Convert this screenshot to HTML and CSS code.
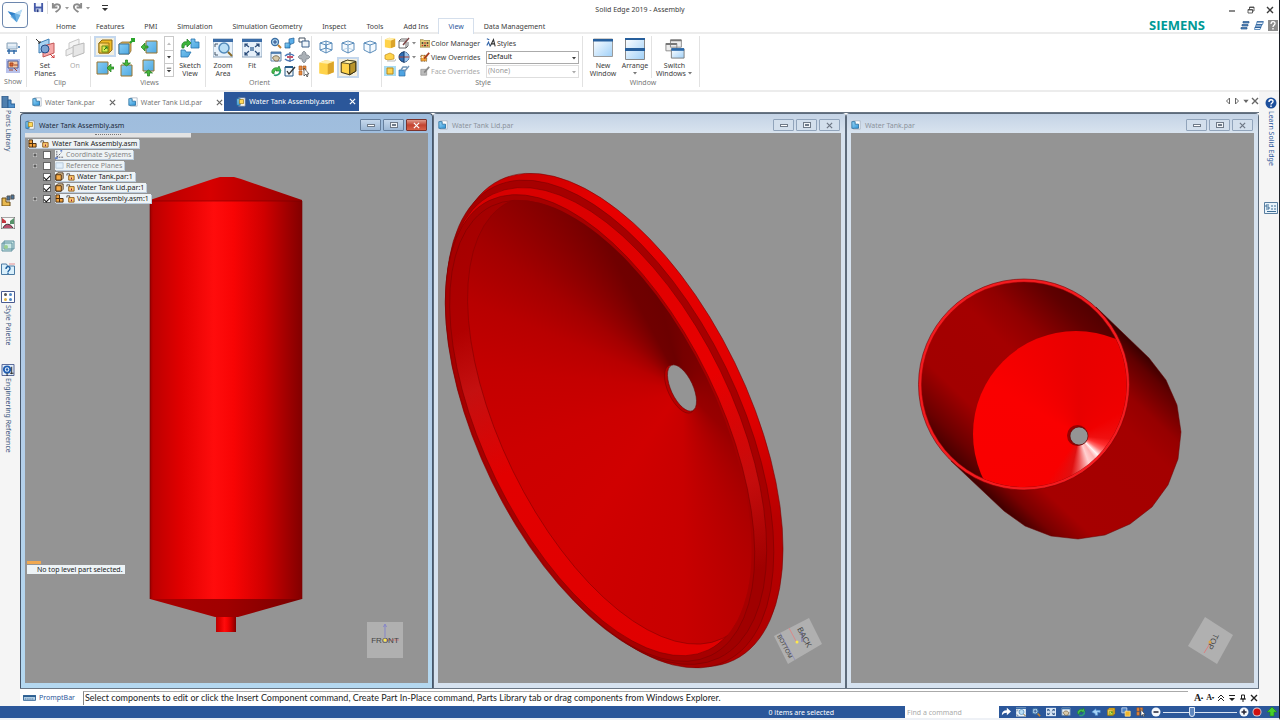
FILE: index.html
```html
<!DOCTYPE html>
<html lang="en">
<head>
<meta charset="utf-8">
<title>Solid Edge 2019 - Assembly</title>
<link rel="stylesheet" href="styles.css">
</head>
<body>
<svg class="defs" aria-hidden="true">
<defs>
<linearGradient id="gBlue" x1="0" y1="0" x2="1" y2="1"><stop offset="0" stop-color="#9bd8f8"/><stop offset="1" stop-color="#2f95d8"/></linearGradient>
<linearGradient id="gPale" x1="0" y1="0" x2="1" y2="1"><stop offset="0" stop-color="#fff"/><stop offset="1" stop-color="#9fd0f8"/></linearGradient>
<linearGradient id="gGold" x1="0" y1="0" x2="1" y2="1"><stop offset="0" stop-color="#ffe88a"/><stop offset="1" stop-color="#e0a010"/></linearGradient>
<linearGradient id="gSq" x1="0" y1="0" x2="1" y2="1"><stop offset="0" stop-color="#86ccf4"/><stop offset="1" stop-color="#4fa9e2"/></linearGradient>
</defs>
<symbol id="logo" viewBox="0 0 24 24"><path d="M4 8l8 2 8-4-6 14z" fill="#9cc9ee"/><path d="M4 8l8 2 2 10z" fill="#2f7fc8"/><path d="M12 10l8-4-6 14z" fill="#b9def6"/><path d="M7 14l5-4 6 2-4 8z" fill="#4f9fdc" opacity=".7"/></symbol>
<symbol id="save" viewBox="0 0 12 12"><path d="M1 1h10v10H2l-1-1z" fill="#4459a8"/><path d="M3 1h6v4H3z" fill="#f2f6fd"/><path d="M3 7h6v4H3z" fill="#c8d4ee"/><path d="M4 8h2v3H4z" fill="#2c3d80"/></symbol>
<symbol id="undo" viewBox="0 0 12 12"><path d="M2 1v5h5M2.500 5.500C5 1 10 2 10 5.500S7 9 5 11" fill="none" stroke="#8b8b8b" stroke-width="2"/></symbol>
<symbol id="dd" viewBox="0 0 6 6"><path d="M1 2h4L3 4.500z" fill="currentColor"/></symbol>
<symbol id="ddbar" viewBox="0 0 8 8"><path d="M1 1h6v1H1zM1 4h6L4 7z" fill="currentColor"/></symbol>
<symbol id="up" viewBox="0 0 6 6"><path d="M1 4h4L3 1.500z" fill="currentColor"/></symbol>
<symbol id="left" viewBox="0 0 8 8"><path d="M5.500 1v6l-3-3z" fill="none" stroke="currentColor"/></symbol>
<symbol id="right" viewBox="0 0 8 8"><path d="M2.500 1v6l3-3z" fill="none" stroke="currentColor"/></symbol>
<symbol id="x" viewBox="0 0 8 8"><path d="M1 1l6 6M7 1L1 7" stroke="currentColor" stroke-width="1.400"/></symbol>
<symbol id="min" viewBox="0 0 8 8"><path d="M1 5h6" stroke="currentColor" stroke-width="1.200"/></symbol>
<symbol id="restore" viewBox="0 0 8 8"><path d="M1 3.500h4.500v3.500H1zM2.500 3.500V1H7v4H5.500M1 4h4.500M2.500 1.500H7" fill="none" stroke="currentColor" stroke-width=".8"/></symbol>
<symbol id="part" viewBox="0 0 12 12"><path d="M3 1h8v10H3z" fill="#fff" stroke="#9aa6b5" stroke-width=".8"/><path d="M1 2h4v3h4v5H1z" fill="url(#gBlue)" stroke="#1b6498" stroke-width=".9"/></symbol>
<symbol id="asm" viewBox="0 0 12 12"><path d="M3 1h8v10H3z" fill="#fff" stroke="#6f8196" stroke-width=".8"/><path d="M1 2h4v8H1z" fill="url(#gBlue)" stroke="#1b6498" stroke-width=".8"/><path d="M4 3h5v5H4z" fill="#ffd95a" stroke="#9a7410" stroke-width=".8"/></symbol>
<symbol id="stack" viewBox="0 0 10 10"><path d="M3 1h6v1.500H3zM2 4h6v1.500H2zM1 7h6v1.500H1z" fill="#4e86bf" stroke="#2c568a" stroke-width=".7"/></symbol>
<symbol id="stack2" viewBox="0 0 10 10"><path d="M3 1h6.500l-1 3H2.500zM2 4h6l-1 2.500H1.500zM1 6.500h6L6 9H.5z" fill="#eef5fc" stroke="#3f77b0" stroke-width=".8"/><path d="M3 1.500h6M2 4.500h6M1 7h6" stroke="#2e609a" stroke-width="1.100"/></symbol>
<symbol id="help" viewBox="0 0 10 11"><path d="M0 0h10v11H0z" fill="#8d8d8d"/><path d="M3 4c0-3 4-3 4-.5C7 5 5 5 5 7M5 8v1.500" fill="none" stroke="#fff" stroke-width="1.300"/></symbol>
<symbol id="show1" viewBox="0 0 14 14"><path d="M1 2h10v6H1z" fill="#cfe0ef" stroke="#8ea4b8"/><path d="M1 10h10M3 8v5M8 9v4M12 6h2" stroke="#2f6aa8" stroke-width="1.400"/><path d="M2 4h8" stroke="#fff"/></symbol>
<symbol id="show2" viewBox="0 0 14 14"><path d="M0 0h14v14H0z" fill="#b8c1ea"/><path d="M2 2h10v7H2z" fill="#f8c79a" stroke="#4a5c98"/><path d="M4 4h3v3H4zM8 6h4M3 11h4M8 9l3 3" fill="#d9682a" stroke="#a4452b"/></symbol>
<symbol id="planes" viewBox="0 0 20 20"><path d="M4 5l10-4v10L4 15z" fill="#a9d3f2" stroke="#3f7fb5"/><path d="M8 8l11-3v10L8 19z" fill="#f5a9a9" stroke="#c25656"/><circle cx="10" cy="11" r="4" fill="#7ba4d4" stroke="#274c86"/><path d="M1 1l4 4M3 5h2V3" fill="none" stroke="#333"/><path d="M15 16l4 4M19 17v3h-3" fill="none" stroke="#c33"/></symbol>
<symbol id="planesOff" viewBox="0 0 20 20"><path d="M4 5l10-4v10L4 15z" fill="#f4f4f4" stroke="#c8c8c8"/><path d="M8 8l11-3v10L8 19z" fill="#e6e6e6" stroke="#b8b8b8"/><path d="M1 12l7-3v6l-7 3z" fill="#ededed" stroke="#c4c4c4"/></symbol>
<symbol id="iso" viewBox="0 0 18 18"><path d="M3 5l3-3h10v10l-3 3H3z" fill="#f0bb24" stroke="#8a6610"/><path d="M3 5h10v10H3z" fill="url(#gGold)" stroke="#9a7410"/><path d="M6 8h6v6H6z" fill="#d6ea4f" stroke="#6a8f16"/><path d="M8 12l3-3M9 9h2v2" fill="none" stroke="#267a22"/></symbol>
<symbol id="vIso" viewBox="0 0 18 18"><path d="M1 6l3-2h9v9l-2 3H1z" fill="#e0b25a" stroke="#8a6a2a" stroke-width=".8"/><path d="M1 6h10v10H1z" fill="url(#gSq)" stroke="#3a769f"/><path d="M12 5l4-4M13 1h3v3" fill="none" stroke="#2ba52b" stroke-width="2"/></symbol>
<symbol id="vL" viewBox="0 0 18 18"><path d="M6 3h11v12H6z" fill="url(#gSq)" stroke="#98742f"/><path d="M1 9l4-4v3h3v2H5v3z" fill="#46b93b" stroke="#1f7d1d" stroke-width=".7"/></symbol>
<symbol id="vR" viewBox="0 0 18 18"><path d="M1 3h11v12H1z" fill="url(#gSq)" stroke="#98742f"/><path d="M11 9l4-4v3h3v2h-3v3z" fill="#46b93b" stroke="#1f7d1d" stroke-width=".7"/></symbol>
<symbol id="vT" viewBox="0 0 18 18"><path d="M3 6h11v11H3z" fill="url(#gSq)" stroke="#98742f"/><path d="M8.500 7l-4-3h3V1h2v3h3z" fill="#46b93b" stroke="#1f7d1d" stroke-width=".7"/></symbol>
<symbol id="vB" viewBox="0 0 18 18"><path d="M3 1h11v11H3z" fill="url(#gSq)" stroke="#98742f"/><path d="M8.500 11l-4 3h3v3h2v-3h3z" fill="#46b93b" stroke="#1f7d1d" stroke-width=".7"/></symbol>
<symbol id="sketch" viewBox="0 0 20 20"><path d="M11 1h4v3h4v6h-8zM1 12h4l1 2h5l-3 5H1z" fill="url(#gBlue)" stroke="#2875ad" stroke-width=".8"/><path d="M2 10C1 5 4 3 7 4V1l4 4-4 4V7C5 6 4 8 4 10z" fill="#3db53b" stroke="#1c7a24" stroke-width=".7"/></symbol>
<symbol id="zoomArea" viewBox="0 0 20 20"><path d="M0 1h20v18H0z" fill="#e8f2fb" stroke="#8ba3bb"/><path d="M0 1h20v3H0z" fill="#3b6da8"/><circle cx="11" cy="10" r="5" fill="#b9def6" stroke="#5289b9" stroke-width="1.500"/><path d="M15 14l4 4" stroke="#8a6a28" stroke-width="2"/><path d="M2 6v3M2 6h3M2 17v-3M2 17h3" stroke="#456"/></symbol>
<symbol id="fit" viewBox="0 0 20 20"><path d="M0 1h20v18H0z" fill="#e6f0fa" stroke="#8ba3bb"/><path d="M0 1h20v3H0z" fill="#3b6da8"/><path d="M8 9h4v4H8z" fill="#6f91b6"/><path d="M3 9V6h3M14 6h3v3M3 14v3h3M14 17h3v-3M3 6l4 3M17 6l-4 3M3 17l4-4M17 17l-4-4" fill="none" stroke="#294b78" stroke-width="1.200"/></symbol>
<symbol id="mag" viewBox="0 0 12 12"><circle cx="5" cy="5" r="3.500" fill="#b7dcf5" stroke="#3c6fa3" stroke-width="1.300"/><path d="M5 3v4M3 5h4" stroke="#274b86"/><path d="M8 8l3 3" stroke="#c08030" stroke-width="2"/></symbol>
<symbol id="blocks" viewBox="0 0 12 12"><path d="M5 2l5-1v5L5 8z" fill="#5aaeea" stroke="#215f95" stroke-width=".7"/><path d="M1 6h5v5H1z" fill="url(#gBlue)" stroke="#215f95" stroke-width=".7"/></symbol>
<symbol id="wins" viewBox="0 0 12 12"><path d="M1 1h6v4H1z" fill="#fff" stroke="#44515f"/><path d="M4 4h7v6H4z" fill="#eef4fa" stroke="#3b5f8a"/></symbol>
<symbol id="cam" viewBox="0 0 12 12"><path d="M1 1h10v9H1z" fill="#e9f1f8" stroke="#6584a5"/><path d="M1 2h10" stroke="#3368a5" stroke-width="1.500"/><path d="M2.500 7c1-3 6-3 7 0L8 10H5z" fill="#d8c9a8" stroke="#6b5a3c" stroke-width=".8"/></symbol>
<symbol id="rot" viewBox="0 0 12 12"><path d="M6 1v10" stroke="#334"/><path d="M1 5c3-3 8-2 9 0M1 8c3 3 8 2 9 0" fill="none" stroke="#4a78b8" stroke-width="1.500"/><path d="M3 5h6v2H3z" fill="#c5536b"/></symbol>
<symbol id="pan" viewBox="0 0 12 12"><path d="M6 0l2 2v2h2l2 2-2 2H8v2l-2 2-2-2V8H2L0 6l2-2h2V2z" fill="#aab0b6" stroke="#6c747c" stroke-width=".6"/></symbol>
<symbol id="cycle" viewBox="0 0 12 12"><path d="M2 8C1 4 5 2 8 3l1-2 2 5-5 0 1-1C5 5 4 6 4 9z" fill="#49c04a" stroke="#1d7d2b" stroke-width=".7"/><path d="M10 5c1 4-3 6-6 5" fill="none" stroke="#2b9f75" stroke-width="1.800"/></symbol>
<symbol id="check" viewBox="0 0 12 12"><path d="M1 2h8v9H1z" fill="#f4f8fb" stroke="#275b89"/><path d="M1 2h8" stroke="#275b89" stroke-width="2"/><path d="M3 6l2 3 6-7" fill="none" stroke="#333" stroke-width="1.300"/></symbol>
<symbol id="pick" viewBox="0 0 12 12"><path d="M1 1h3v4H1zM5 1h3v4H5zM1 6h3v4H1z" fill="#e98a3b" stroke="#a3521b" stroke-width=".6"/><path d="M6 3v8l2-2 1 3 1-1-1-2h2z" fill="#fff" stroke="#333" stroke-width=".7"/></symbol>
<symbol id="wire1" viewBox="0 0 14 14"><path d="M1 3l6 2v8l-6-3zM7 5l6-2v7l-6 3M1 3l6-2 6 2M7 1v7l-6 2M7 8l6 2" fill="#f5fafe" stroke="#4c82b4" stroke-width=".9"/></symbol>
<symbol id="wire2" viewBox="0 0 14 14"><path d="M1 3l6 2v8l-6-3zM7 5l6-2v7l-6 3M1 3l6-2 6 2" fill="#f5fafe" stroke="#4c82b4" stroke-width=".9"/><path d="M7 1v7l-6 2M7 8l6 2" fill="none" stroke="#a9c7e0" stroke-width=".7"/></symbol>
<symbol id="wire3" viewBox="0 0 14 14"><path d="M1 3l6-2 6 2v7l-6 3-6-3z" fill="#f5fafe" stroke="#4c82b4" stroke-width=".9"/><path d="M1 3l6 2 6-2M7 5v8" fill="none" stroke="#4c82b4" stroke-width=".9"/></symbol>
<symbol id="gold" viewBox="0 0 14 14"><path d="M1 3l5-2 7 1v9l-6 2-6-1z" fill="#ffd34a"/><path d="M8 4l5-2v9l-5 2z" fill="#dba42a"/><path d="M1 3l5-2 7 1-5 2z" fill="#ffeeb0"/></symbol>
<symbol id="goldEdge" viewBox="0 0 14 14"><path d="M1 3l5-2 7 1v8l-5 3-7-2z" fill="#ffd34a" stroke="#353015" stroke-width=".8"/><path d="M8 4l5-2v8l-5 3z" fill="#b8942c" stroke="#353015" stroke-width=".8"/><path d="M1 3l7 1 5-2-7-1z" fill="#fff0a8" stroke="#353015" stroke-width=".6"/></symbol>
<symbol id="goldBlue" viewBox="0 0 12 12"><path d="M0 1h12v10H0z" fill="#a9dcf2"/><path d="M3 3h6v6H3z" fill="#ffd44f" stroke="#ba8a18"/></symbol>
<symbol id="flat" viewBox="0 0 12 12"><path d="M1 4l5-2 4 2v4l-6 1-3-1z" fill="#ffd34a" stroke="#c18d1b" stroke-width=".7"/><path d="M3 10h8l1-2" fill="none" stroke="#bbb"/></symbol>
<symbol id="boxpen" viewBox="0 0 12 12"><path d="M1 4h7v7H1zM1 4l2-2h6M8 11l2-2V5" fill="#fff" stroke="#444" stroke-width=".8"/><path d="M5 8l6-7" stroke="#7b4444" stroke-width="1.500"/></symbol>
<symbol id="ball" viewBox="0 0 12 12"><circle cx="6" cy="6" r="5" fill="#2e6fb7" stroke="#173a6a"/><path d="M6 1a5 5 0 0 1 0 10z" fill="#9cc5ec"/><path d="M1 6h10" stroke="#b33c2c"/><path d="M6 0v12" stroke="#173a6a"/></symbol>
<symbol id="shade" viewBox="0 0 12 12"><path d="M1 5h6v6H1z" fill="#4ea4e2" stroke="#2b6aa0" stroke-width=".7"/><path d="M6 7l5-6M3 5l2-3h4" fill="none" stroke="#7396b8" stroke-width="1.500"/></symbol>
<symbol id="palette" viewBox="0 0 12 12"><path d="M0 2h4l1 1h7v8H0z" fill="#e5d07b" stroke="#7d6b28" stroke-width=".7"/><path d="M2 5h2v2H2zM8 5h2v2H8zM5 8h2v2H5z" fill="#222"/><path d="M5 5h2v2H5zM2 8h2v2H2zM8 8h2v2H8z" fill="#c33d30"/></symbol>
<symbol id="override" viewBox="0 0 12 12"><path d="M1 4h7v7H1z" fill="#f3a43a" stroke="#473311" stroke-dasharray="1 1"/><path d="M5 8l6-7" stroke="#a53d20" stroke-width="2"/><path d="M2 5h2v2H2z" fill="#fff"/></symbol>
<symbol id="overrideOff" viewBox="0 0 12 12"><path d="M1 4h7v7H1z" fill="#bbb" stroke="#999"/><path d="M5 8l6-7" stroke="#888" stroke-width="2"/></symbol>
<symbol id="styles" viewBox="0 0 12 12"><path d="M5 10l4-8 2 8M6 7h4" fill="none" stroke="#333" stroke-width="1.300"/><path d="M1 9l2-4 2 5M1 1l3 1" fill="none" stroke="#2f62a7" stroke-width="1.300"/></symbol>
<symbol id="win" viewBox="0 0 20 20"><path d="M.5 1h19v17.500H.5z" fill="url(#gPale)" stroke="#9b9b9b"/><path d="M0 1h20v2.500H0z" fill="#275f9c"/></symbol>
<symbol id="arrange" viewBox="0 0 20 22"><path d="M.5.5h19v10H.5zM.5 11.500h19v10H.5z" fill="url(#gPale)" stroke="#888"/><path d="M0 0h20v2H0zM0 10h20v3H0z" fill="#275f9c"/></symbol>
<symbol id="switch" viewBox="0 0 22 22"><path d="M6 1h12v8H6zM1 5h12v8H1z" fill="#eee" stroke="#888"/><path d="M6 1.500h12M1 5.500h12" stroke="#777" stroke-width="2"/><path d="M7 11h14v10H7z" fill="url(#gPale)" stroke="#777"/><path d="M7 11.500h14" stroke="#2a68a8" stroke-width="3"/></symbol>
<symbol id="lib" viewBox="0 0 14 12"><path d="M1 0h6v12H1z" fill="#4f7fae" stroke="#345f8c"/><path d="M7 4h3v4h4v4H7z" fill="#4f90cb" stroke="#2b5f92"/></symbol>
<symbol id="r2" viewBox="0 0 14 12"><path d="M1 4h4v4h4v4H1z" fill="#e8b84e" stroke="#6a4d19"/><path d="M6 2h3v4H6zM10 1h3v4h-3z" fill="#47739b" stroke="#555"/></symbol>
<symbol id="r3" viewBox="0 0 14 12"><path d="M0 0h14v12H0z" fill="#f8f8f8" stroke="#555"/><path d="M1 1l4 3v2H1z" fill="#c2343d"/><path d="M13 1L9 4v3h4z" fill="#55936a"/><path d="M2 11c2-5 7-5 10 0" fill="#b9506e" stroke="#333"/></symbol>
<symbol id="r4" viewBox="0 0 14 12"><path d="M3 1h10v8H3zM1 3h10v8H1z" fill="#cde9e6" stroke="#5c8e9e"/><circle cx="5" cy="7" r="2" fill="#9bcf8f"/></symbol>
<symbol id="r5" viewBox="0 0 14 12"><path d="M.5 1h5l1 2h7v8.500H.5z" fill="#d9effb" stroke="#4c7ba3"/><path d="M8 1h6" stroke="#e38f92"/><path d="M5 6c0-3 4-3 4-.5S7 7 7 9M7 9.500V11" fill="none" stroke="#17599a" stroke-width="1.300"/></symbol>
<symbol id="r6" viewBox="0 0 14 12"><path d="M.5.5h13v11H.5z" fill="#fff" stroke="#4a5b90"/><circle cx="4.500" cy="3.500" r="1.500" fill="#555"/><circle cx="9.500" cy="3.500" r="1.500" fill="#4f86c4"/><circle cx="4.500" cy="8.500" r="1.500" fill="#e1b23b"/><circle cx="9.500" cy="8.500" r="1.500" fill="#4f86c4"/></symbol>
<symbol id="r7" viewBox="0 0 14 13"><path d="M.5.5h13v12H.5z" fill="#e4effa" stroke="#4a5b90"/><circle cx="6" cy="6" r="3.500" fill="none" stroke="#1e5cb0" stroke-width="2"/><circle cx="6" cy="6" r="1.300" fill="#1e5cb0"/><path d="M9 10h4M11 3v8M6 10v3" stroke="#222"/></symbol>
<symbol id="q" viewBox="0 0 12 12"><circle cx="6" cy="6" r="5.500" fill="#1c4f9c"/><path d="M4 5c0-3 4-3 4-.5C8 6 6 6 6 7.500M6 8.500V10" fill="none" stroke="#fff" stroke-width="1.400"/></symbol>
<symbol id="s1" viewBox="0 0 14 12"><path d="M.5.5h13v11H.5z" fill="#e8f3fb" stroke="#5a7fa0"/><path d="M5 3H2v2h3v2H2M7 4h2M10 4h2M7 7h2M10 7h2M3 9.500h9" fill="none" stroke="#3d6d95"/></symbol>
<symbol id="tAsm" viewBox="0 0 10 10"><path d="M1 1h4v4h4v4H1z" fill="#f0a23e" stroke="#3d2208"/><path d="M1 5h4v4" fill="none" stroke="#3d2208"/></symbol>
<symbol id="tLock" viewBox="0 0 10 10"><path d="M1 4V2h3v3" fill="none" stroke="#555"/><path d="M3 4h6v5H3z" fill="#ffcc70" stroke="#8a5a1c"/><path d="M5.500 6h1v2h-1z" fill="#704"/></symbol>
<symbol id="tCs" viewBox="0 0 10 10"><path d="M2 1v7h7M2 8l5-5" fill="none" stroke="#556" stroke-dasharray="2 1"/><path d="M0 9h3M6 1h2" stroke="#345dc0" stroke-width="1.500"/></symbol>
<symbol id="tPl" viewBox="0 0 10 10"><path d="M1 2h8v6H1z" fill="#e2effb" stroke="#b5c8da"/></symbol>
<symbol id="tPart" viewBox="0 0 10 10"><path d="M1 3l2-2h6v6L7 9H1z" fill="#fbe2b4" stroke="#3d2208"/><path d="M1 3h6v6H1z" fill="#f7ab44" stroke="#3d2208"/></symbol>
<symbol id="plus" viewBox="0 0 8 8"><path d="M.5.5h7v7h-7z" fill="#bdbdbd" stroke="#8a8a8a"/><path d="M2 4h4M4 2v4" stroke="#222"/></symbol>
<symbol id="prompt" viewBox="0 0 14 6"><path d="M.5.5h13v5H.5z" fill="#bcd6ea" stroke="#2c5f92"/><path d="M0 1h14" stroke="#2c5f92" stroke-width="2"/><path d="M2 4h10" stroke="#2c5f92" stroke-dasharray="1 1"/></symbol>
<symbol id="chev" viewBox="0 0 8 8"><path d="M1 4l3-3 3 3M1 7l3-3 3 3" fill="none" stroke="currentColor"/></symbol>
<symbol id="pin" viewBox="0 0 8 8"><path d="M2.500 1h3v4h-3zM1 5h6M4 5v3" fill="none" stroke="currentColor"/></symbol>
<symbol id="share" viewBox="0 0 12 12"><path d="M1 10c0-4 2-6 6-6V1l5 4.500L7 10V7C4 7 3 8 1 10z" fill="#fff"/></symbol>
<symbol id="fitw" viewBox="0 0 12 12"><path d="M0 1h12v10H0z" fill="#dbe8f6"/><path d="M2 3l3 2M10 3L7 5M2 9l3-2M10 9L7 7M2 5V3h2M10 5V3H8M2 7v2h2M10 7v2H8" fill="none" stroke="#234a80"/></symbol>
<symbol id="bluearrow" viewBox="0 0 12 12"><path d="M1 6l5-4v2h5v3l-3-1v4H5V8z" fill="#a6d3f7" stroke="#4f93d2" stroke-width=".7"/></symbol>
<symbol id="two" viewBox="0 0 12 12"><path d="M1 1h6v6H1z" fill="#4d82c4" stroke="#cfdced"/><path d="M5 5h6v6H5z" fill="#f0b52b" stroke="#ffdf8a"/></symbol>
<symbol id="zm" viewBox="0 0 10 10"><circle cx="5" cy="5" r="4.500" fill="#f5f8fc"/><path d="M2.500 5h5" stroke="#223" stroke-width="1.500"/></symbol>
<symbol id="zp" viewBox="0 0 10 10"><circle cx="5" cy="5" r="4.500" fill="#f5f8fc"/><path d="M2.500 5h5M5 2.500v5" stroke="#223" stroke-width="1.500"/></symbol>
<symbol id="rec" viewBox="0 0 10 10"><circle cx="5" cy="5" r="4.500" fill="#d9d0d8"/><circle cx="5" cy="5" r="3.600" fill="#d00f0f"/></symbol>
<symbol id="upg" viewBox="0 0 10 10"><path d="M5 0l5 5H7v4H3V5H0z" fill="#46cf2b" stroke="#1d8a15" stroke-width=".6"/></symbol>
</svg>

<header class="top">
  <button class="app" aria-label="Application menu"><svg><use href="#logo"/></svg></button>
  <div class="top-rows">
    <div class="titlebar">
      <div class="quick">
        <button aria-label="Save"><svg><use href="#save"/></svg></button><i class="qsep"></i>
        <button aria-label="Undo"><svg><use href="#undo"/></svg></button><svg class="tiny"><use href="#dd"/></svg>
        <button aria-label="Redo"><svg class="flip"><use href="#undo"/></svg></button><svg class="tiny"><use href="#dd"/></svg>
        <button class="more" aria-label="Customize"><svg class="tiny8"><use href="#ddbar"/></svg></button>
      </div>
      <h1 class="title">Solid Edge 2019 - Assembly</h1>
      <div class="sys">
        <button aria-label="Minimize"><svg><use href="#min"/></svg></button>
        <button aria-label="Restore"><svg><use href="#restore"/></svg></button>
        <button aria-label="Close"><svg><use href="#x"/></svg></button>
      </div>
    </div>
    <div class="menurow">
      <nav class="menu">
        <button>Home</button><button>Features</button><button>PMI</button><button>Simulation</button><button>Simulation Geometry</button><button>Inspect</button><button>Tools</button><button>Add Ins</button><button class="on">View</button><button>Data Management</button>
      </nav>
      <span class="brand">SIEMENS</span>
      <div class="helpers">
        <button aria-label="Stack"><svg><use href="#stack"/></svg></button><button aria-label="Cascade"><svg><use href="#stack2"/></svg></button><button aria-label="Help"><svg><use href="#help"/></svg></button>
      </div>
    </div>
  </div>
</header>

<section class="ribbon">
  <div class="group g-show">
    <div class="body col"><button aria-label="Show bars"><svg class="i14"><use href="#show1"/></svg></button><button aria-label="Show panes"><svg class="i14"><use href="#show2"/></svg></button></div>
    <h2>Show</h2>
  </div>
  <div class="group g-clip">
    <div class="body"><button class="big"><svg class="i20"><use href="#planes"/></svg><span>Set<br>Planes</span></button><button class="big" disabled><svg class="i20"><use href="#planesOff"/></svg><span>On</span></button></div>
    <h2>Clip</h2>
  </div>
  <div class="group g-views">
    <div class="body">
      <div class="gallery">
        <button class="sel" aria-label="Iso"><svg class="i18"><use href="#iso"/></svg></button><button aria-label="Dimetric"><svg class="i18"><use href="#vIso"/></svg></button><button aria-label="Left"><svg class="i18"><use href="#vL"/></svg></button>
        <button aria-label="Right"><svg class="i18"><use href="#vR"/></svg></button><button aria-label="Top"><svg class="i18"><use href="#vT"/></svg></button><button aria-label="Bottom"><svg class="i18"><use href="#vB"/></svg></button>
      </div>
      <div class="scroller"><button disabled aria-label="Up"><svg class="tiny"><use href="#up"/></svg></button><button aria-label="Down"><svg class="tiny"><use href="#dd"/></svg></button><button aria-label="All"><svg class="tiny"><use href="#ddbar"/></svg></button></div>
      <button class="big"><svg class="i20"><use href="#sketch"/></svg><span>Sketch<br>View</span></button>
    </div>
    <h2>Views</h2>
  </div>
  <div class="group g-orient">
    <div class="body">
      <button class="big"><svg class="i20"><use href="#zoomArea"/></svg><span>Zoom<br>Area</span></button><button class="big"><svg class="i20"><use href="#fit"/></svg><span>Fit</span></button>
      <div class="mini">
        <button aria-label="Zoom"><svg class="i12"><use href="#mag"/></svg></button><button aria-label="Previous"><svg class="i12"><use href="#blocks"/></svg></button><button aria-label="Window"><svg class="i12"><use href="#wins"/></svg></button>
        <button aria-label="Look"><svg class="i12"><use href="#cam"/></svg></button><button aria-label="Rotate"><svg class="i12"><use href="#rot"/></svg></button><button aria-label="Pan"><svg class="i12"><use href="#pan"/></svg></button>
        <button aria-label="Refresh"><svg class="i12"><use href="#cycle"/></svg></button><button aria-label="Sketch"><svg class="i12"><use href="#check"/></svg></button><button aria-label="Pick"><svg class="i12"><use href="#pick"/></svg></button>
      </div>
    </div>
    <h2>Orient</h2>
  </div>
  <div class="group g-shade">
    <div class="body gallery">
      <button aria-label="Wire frame"><svg class="i14"><use href="#wire1"/></svg></button><button aria-label="Hidden edges"><svg class="i14"><use href="#wire2"/></svg></button><button aria-label="Visible edges"><svg class="i14"><use href="#wire3"/></svg></button>
      <button aria-label="Shaded"><svg class="i16"><use href="#gold"/></svg></button><button class="sel" aria-label="Shaded with edges"><svg class="i16"><use href="#goldEdge"/></svg></button>
    </div>
  </div>
  <div class="group g-style">
    <div class="body">
      <div class="mini two">
        <button aria-label="Shadow"><svg class="i12"><use href="#gold"/></svg></button><button aria-label="Edges"><svg class="i12"><use href="#boxpen"/></svg><svg class="tiny"><use href="#dd"/></svg></button>
        <button aria-label="Floor"><svg class="i12"><use href="#flat"/></svg></button><button aria-label="Reflection"><svg class="i12"><use href="#ball"/></svg><svg class="tiny"><use href="#dd"/></svg></button>
        <button aria-label="Perspective"><svg class="i12"><use href="#goldBlue"/></svg></button><button aria-label="Sharpen"><svg class="i12"><use href="#shade"/></svg></button>
      </div>
      <div class="cmds"><button><svg class="i10"><use href="#palette"/></svg>Color Manager</button><label for="vo"><svg class="i10"><use href="#override"/></svg>View Overrides</label><label for="fo" class="off"><svg class="i10"><use href="#overrideOff"/></svg>Face Overrides</label></div>
      <div class="cmds picks">
        <button><svg class="i10"><use href="#styles"/></svg>Styles</button>
        <span class="combo"><select id="vo"><option>Default</option></select><svg class="tiny"><use href="#dd"/></svg></span>
        <span class="combo off"><select id="fo" disabled><option>(None)</option></select><svg class="tiny"><use href="#dd"/></svg></span>
      </div>
    </div>
    <h2>Style</h2>
  </div>
  <div class="group g-window">
    <div class="body"><button class="big"><svg class="i20"><use href="#win"/></svg><span>New<br>Window</span></button><button class="big"><svg class="i20 tall"><use href="#arrange"/></svg><span>Arrange</span><svg class="tiny"><use href="#dd"/></svg></button><button class="big sw"><svg class="i20 tall"><use href="#switch"/></svg><span>Switch<br>Windows<svg class="tiny"><use href="#dd"/></svg></span></button></div>
    <h2>Window</h2>
  </div>
</section>

<div class="work">
  <aside class="rail left">
    <button class="r-lib"><svg><use href="#lib"/></svg><span>Parts Library</span></button>
    <button aria-label="Alternate assemblies"><svg><use href="#r2"/></svg></button>
    <button aria-label="Sensors"><svg><use href="#r3"/></svg></button>
    <button aria-label="Layers"><svg><use href="#r4"/></svg></button>
    <button aria-label="Select tools"><svg><use href="#r5"/></svg></button>
    <button class="r-style"><svg><use href="#r6"/></svg><span>Style Palette</span></button>
    <button><svg><use href="#r7"/></svg><span>Engineering Reference</span></button>
  </aside>

  <main class="center">
    <div class="doctabs">
      <div class="tab"><svg class="i10"><use href="#part"/></svg><span>Water Tank.par</span><button aria-label="Close tab"><svg><use href="#x"/></svg></button></div>
      <div class="tab"><svg class="i10"><use href="#part"/></svg><span>Water Tank Lid.par</span><button aria-label="Close tab"><svg><use href="#x"/></svg></button></div>
      <div class="tab on"><svg class="i10"><use href="#asm"/></svg><span>Water Tank Assembly.asm</span><button aria-label="Close tab"><svg><use href="#x"/></svg></button></div>
      <div class="tabnav"><button aria-label="Previous tab"><svg><use href="#left"/></svg></button><button aria-label="Next tab"><svg><use href="#right"/></svg></button><button aria-label="Tab list"><svg class="tiny8"><use href="#dd"/></svg></button><button aria-label="Close"><svg><use href="#x"/></svg></button></div>
    </div>

    <div class="mdi">
      <section class="doc active">
        <div class="dochead"><svg class="i10"><use href="#asm"/></svg><h3>Water Tank Assembly.asm</h3>
          <div class="winbtns"><button aria-label="Minimize"><i class="b-min"></i></button><button aria-label="Maximize"><i class="b-max"></i></button><button class="close" aria-label="Close"><svg><use href="#x"/></svg></button></div></div>
        <div class="view">
          <svg class="scene" viewBox="25 133 403 550" preserveAspectRatio="xMidYMid meet">
            <defs>
              <linearGradient id="tb"><stop offset="0" stop-color="#900"/><stop offset=".02" stop-color="#bc0000"/><stop offset=".2" stop-color="#e00000"/><stop offset=".42" stop-color="#ff0c0c"/><stop offset=".55" stop-color="#f80404"/><stop offset=".75" stop-color="#d00000"/><stop offset="1" stop-color="#820000"/></linearGradient>
              <linearGradient id="tc"><stop offset="0" stop-color="#b40000"/><stop offset=".4" stop-color="#d60000"/><stop offset="1" stop-color="#960000"/></linearGradient>
              <linearGradient id="td"><stop offset="0" stop-color="#a80000"/><stop offset=".5" stop-color="#a00000"/><stop offset="1" stop-color="#780000"/></linearGradient>
            </defs>
            <path d="M150 200l63-21 7-2h14l7 2 61 21v3H150z" fill="url(#tc)"/>
            <path d="M150 201h152v398H150z" fill="url(#tb)"/>
            <path d="M150 599V201h152v398" fill="none" stroke="#700" stroke-width=".6"/>
            <path d="M150 599h152l-64 18h-23z" fill="url(#td)"/>
            <path d="M216 617h20v15h-20z" fill="url(#tb)"/>
          </svg>
          <div class="pathfinder">
            <div class="grip"></div>
            <ul>
              <li class="root"><span class="chip"><svg class="i10"><use href="#tAsm"/></svg><svg class="i10"><use href="#tLock"/></svg>Water Tank Assembly.asm</span></li>
              <li><svg class="exp"><use href="#plus"/></svg><input type="checkbox" id="c1"><label for="c1" class="chip dim"><svg class="i10"><use href="#tCs"/></svg>Coordinate Systems</label></li>
              <li><svg class="exp"><use href="#plus"/></svg><input type="checkbox" id="c2"><label for="c2" class="chip dim"><svg class="i10"><use href="#tPl"/></svg>Reference Planes</label></li>
              <li><i class="exp"></i><input type="checkbox" id="c3" checked><label for="c3" class="chip"><svg class="i10"><use href="#tPart"/></svg><svg class="i10"><use href="#tLock"/></svg>Water Tank.par:1</label></li>
              <li><i class="exp"></i><input type="checkbox" id="c4" checked><label for="c4" class="chip"><svg class="i10"><use href="#tPart"/></svg><svg class="i10"><use href="#tLock"/></svg>Water Tank Lid.par:1</label></li>
              <li><svg class="exp"><use href="#plus"/></svg><input type="checkbox" id="c5" checked><label for="c5" class="chip"><svg class="i10"><use href="#tAsm"/></svg><svg class="i10"><use href="#tLock"/></svg>Valve Assembly.asm:1</label></li>
            </ul>
          </div>
          <div class="note"><i></i><p>No top level part selected.</p></div>
          <svg class="cube" viewBox="0 0 48 48"><path d="M6 6h36v36H6z" fill="#b0b0b0"/><path d="M24 24V9M22.500 11L24 8l1.500 3" fill="none" stroke="#8585c8"/><path d="M24 24h14" stroke="#d08080"/><text x="24" y="27" text-anchor="middle">FRONT</text><circle cx="24" cy="24" r="1.500" fill="#ffe94a"/></svg>
        </div>
      </section>

      <section class="doc">
        <div class="dochead"><svg class="i10"><use href="#part"/></svg><h3>Water Tank Lid.par</h3>
          <div class="winbtns"><button aria-label="Minimize"><i class="b-min"></i></button><button aria-label="Maximize"><i class="b-max"></i></button><button aria-label="Close"><svg><use href="#x"/></svg></button></div></div>
        <div class="view">
          <svg class="scene" viewBox="438 133 403 550" preserveAspectRatio="xMidYMid meet">
            <defs>
              <linearGradient id="la" gradientUnits="userSpaceOnUse" x1="-268" y1="0" x2="268" y2="0"><stop offset="0" stop-color="#c80000"/><stop offset=".12" stop-color="#e80000"/><stop offset=".6" stop-color="#e00000"/><stop offset=".8" stop-color="#b80000"/><stop offset="1" stop-color="#b00000"/></linearGradient>
              <linearGradient id="lb" gradientUnits="userSpaceOnUse" x1="-258" y1="0" x2="258" y2="0"><stop offset="0" stop-color="#d80000"/><stop offset=".5" stop-color="#e80000"/><stop offset=".72" stop-color="#c40c0c"/><stop offset=".88" stop-color="#a00000"/></linearGradient>
              <linearGradient id="lc" gradientUnits="userSpaceOnUse" x1="-247" y1="0" x2="247" y2="0"><stop offset="0" stop-color="#a40000"/><stop offset=".2" stop-color="#b00000"/><stop offset=".32" stop-color="#c41010"/><stop offset=".5" stop-color="#e20000"/><stop offset="1" stop-color="#e00000"/></linearGradient>
              <clipPath id="rim"><ellipse rx="247" ry="118" transform="translate(600 428) rotate(64)"/></clipPath>
              <clipPath id="bowl"><ellipse rx="243" ry="115" transform="translate(616 420) rotate(64)"/></clipPath>
            </defs>
            <g stroke="#700" stroke-width=".5">
              <ellipse rx="267" ry="131" transform="translate(617 420) rotate(64)" fill="url(#la)"/>
              <ellipse rx="264" ry="129" transform="translate(610 424) rotate(64)" fill="#a60000"/>
              <ellipse rx="258" ry="127" transform="translate(606 426) rotate(64)" fill="url(#lb)"/>
              <ellipse rx="253" ry="120" transform="translate(600 428) rotate(64)" fill="#a60000"/>
              <ellipse rx="247" ry="116" transform="translate(600 428) rotate(64)" fill="url(#lc)"/>
            </g>
            <g clip-path="url(#rim)"><g clip-path="url(#bowl)"><foreignObject x="438" y="180" width="360" height="480"><div class="lid-shade"></div></foreignObject></g>
            <ellipse rx="243" ry="115" transform="translate(616 420) rotate(64)" fill="none" stroke="#800" stroke-width=".6"/></g>
            <ellipse rx="26" ry="12" transform="translate(680 389) rotate(65)" fill="#b80000" stroke="#700" stroke-width=".5"/>
            <ellipse rx="25" ry="11" transform="translate(682 388) rotate(65)" fill="#949494" stroke="#600" stroke-width=".5"/>
          </svg>
          <svg class="cube" viewBox="0 0 48 48"><path d="M0 20l35-18 13 26-34 20z" fill="#b0b0b0"/><path d="M6 17l15 27" stroke="#8a8ac0" stroke-width=".7"/><path d="M15 12l8 15" stroke="#d98b8b"/><path d="M28 26V16" stroke="#6f6fc6"/><text class="s7" transform="translate(23 13) rotate(62)">BACK</text><text class="s5" transform="translate(3 20) rotate(62)">BOTTOM</text><circle cx="23" cy="26" r="1.500" fill="#ffe94a"/></svg>
        </div>
      </section>

      <section class="doc">
        <div class="dochead"><svg class="i10"><use href="#part"/></svg><h3>Water Tank.par</h3>
          <div class="winbtns"><button aria-label="Minimize"><i class="b-min"></i></button><button aria-label="Maximize"><i class="b-max"></i></button><button aria-label="Close"><svg><use href="#x"/></svg></button></div></div>
        <div class="view">
          <svg class="scene" viewBox="851 133 403 550" preserveAspectRatio="xMidYMid meet">
            <defs>
              <linearGradient id="ca" gradientUnits="userSpaceOnUse" x1="1122" y1="332" x2="978" y2="486"><stop offset="0" stop-color="#380000"/><stop offset=".06" stop-color="#600000"/><stop offset=".2" stop-color="#960000"/><stop offset=".32" stop-color="#a40000"/><stop offset=".8" stop-color="#a60000"/><stop offset=".92" stop-color="#780000"/><stop offset="1" stop-color="#400000"/></linearGradient>
              <linearGradient id="cb" gradientUnits="userSpaceOnUse" x1="1096" y1="308" x2="951" y2="461"><stop offset="0" stop-color="#500000"/><stop offset=".1" stop-color="#600000"/><stop offset=".28" stop-color="#900000"/><stop offset=".42" stop-color="#a40000"/><stop offset=".74" stop-color="#a20000"/><stop offset=".9" stop-color="#6c0000"/><stop offset="1" stop-color="#400000"/></linearGradient>
              <clipPath id="mouth"><circle cx="1024" cy="384.500" r="102.500"/></clipPath>
              <clipPath id="floor"><circle cx="1076" cy="434" r="103"/></clipPath>
            </defs>
            <path d="M1096 307L1149 358 1166 380 1177 405 1181 432 1178 459 1168 485 1152 507 1130 524 1105 535 1078 539 1051 536 1025 526 1004 511 951 461z" fill="url(#ca)" stroke="#600" stroke-width=".5"/>
            <circle cx="1024" cy="384.500" r="105.500" fill="#f41c20" stroke="#700" stroke-width=".6"/>
            <circle cx="1024" cy="384.500" r="102.500" fill="url(#cb)" stroke="#900" stroke-width=".5"/>
            <g clip-path="url(#mouth)"><g clip-path="url(#floor)"><foreignObject x="960" y="320" width="180" height="180"><div class="can-shade"></div></foreignObject></g></g>
            <circle cx="1077.500" cy="435.500" r="10.500" fill="#900"/>
            <circle cx="1079" cy="436" r="9" fill="#949494" stroke="#500" stroke-width=".6"/>
          </svg>
          <svg class="cube" viewBox="0 0 48 48"><path d="M18 1l28 18-16 29L1 30z" fill="#b0b0b0"/><path d="M24 26l-7 11" stroke="#dc7f7f"/><text class="s7" transform="translate(27 17) rotate(115)">TOP</text><circle cx="23" cy="26" r="1.500" fill="#dfa43f"/></svg>
        </div>
      </section>
    </div>

    <div class="promptbar">
      <svg class="pi"><use href="#prompt"/></svg><span class="pl">PromptBar</span>
      <p>Select components to edit or click the Insert Component command, Create Part In-Place command, Parts Library tab or drag components from Windows Explorer.</p>
      <div class="ptools"><button class="fa">A<sup>▴</sup></button><button class="fb">A<sup>▾</sup></button><button aria-label="Collapse"><svg><use href="#chev"/></svg></button><button aria-label="Menu"><svg><use href="#ddbar"/></svg></button><button aria-label="Pin"><svg><use href="#pin"/></svg></button><button aria-label="Close"><svg><use href="#x"/></svg></button></div>
    </div>
  </main>

  <aside class="rail rightrail">
    <button class="r-learn"><svg class="i12"><use href="#q"/></svg><span>Learn Solid Edge</span></button>
    <button aria-label="Properties"><svg><use href="#s1"/></svg></button>
  </aside>
</div>

<footer class="status">
  <span class="count">0 items are selected</span>
  <input type="text" placeholder="Find a command" aria-label="Find a command">
  <div class="stools">
    <button aria-label="Go"><svg><use href="#share"/></svg></button><button aria-label="Zoom area"><svg><use href="#zoomArea"/></svg></button><button aria-label="Zoom"><svg><use href="#mag"/></svg></button><button aria-label="Fit"><svg><use href="#fitw"/></svg></button><button aria-label="Pan"><svg><use href="#cam"/></svg></button><button aria-label="Rotate"><svg><use href="#cycle"/></svg></button><button aria-label="Previous view"><svg><use href="#bluearrow"/></svg></button><button aria-label="View orientation"><svg><use href="#iso"/></svg></button><button aria-label="View style"><svg><use href="#two"/></svg></button><button aria-label="Pick"><svg><use href="#pick"/></svg></button>
  </div>
  <button aria-label="Zoom out"><svg><use href="#zm"/></svg></button>
  <input type="range" aria-label="Zoom level" min="0" max="100" value="38">
  <button aria-label="Zoom in"><svg><use href="#zp"/></svg></button>
  <button class="rec" aria-label="Record"><svg><use href="#rec"/></svg></button><button class="rec" aria-label="Upload"><svg><use href="#upg"/></svg></button>
</footer>
</body>
</html>
```

FILE: styles.css
```css
* { box-sizing: border-box; margin: 0; padding: 0; }
html, body { height: 100%; }
body {
  display: flex;
  flex-direction: column;
  border-right: 1px solid #1b1f26;
  border-bottom: 2px solid #eef1f6;
  background: #fff;
  color: #3c3c3c;
  font: 7px/9px "Noto Sans", "Open Sans", sans-serif;
  overflow: hidden;
}
button { border: 0; background: none; font: inherit; color: inherit; display: flex; align-items: center; justify-content: center; flex: none; }
h1, h2, h3 { font: inherit; }
ul { list-style: none; }
svg { display: block; flex: none; width: 8px; height: 8px; }
.defs { position: absolute; width: 0; height: 0; }
.i10 { width: 10px; height: 10px; }
.i12 { width: 12px; height: 12px; }
.i14 { width: 14px; height: 14px; }
.i16 { width: 17px; height: 17px; }
.i18 { width: 18px; height: 18px; }
.i20 { width: 20px; height: 20px; }
.tiny { width: 6px; height: 6px; }
.tiny8 { width: 8px; height: 8px; }
.flip { transform: scaleX(-1); }

/* title and menu */
.top { display: flex; height: 34px; border-bottom: 2px solid #ececec; }
.app { width: 26px; height: 26px; margin: 2px 0 0 2px; border: 1px solid #6b86ad; border-radius: 4px; background: #fdfefe; }
.app svg { width: 22px; height: 22px; }
.top-rows { flex: 1; display: flex; flex-direction: column; }
.titlebar { display: grid; grid-template-columns: 1fr auto 1fr; align-items: center; height: 18px; padding-top: 1px; }
.quick { display: flex; align-items: center; padding: 0 0 4px 5px; }
.quick svg:not(.tiny):not(.tiny8) { width: 11px; height: 11px; }
.qsep { width: 1px; height: 13px; margin: 0 3px; background: #ddd; }
.quick .tiny { margin: 0 2px; color: #999; }
.more { margin-left: 8px; color: #333; }
.title { padding-right: 27px; }
.sys { display: flex; justify-content: flex-end; gap: 11px; padding-right: 5px; }
.menurow { display: flex; height: 14px; align-items: stretch; }
.menu { display: flex; flex: 1; padding-left: 18px; }
.menu button { padding: 2px 9px 0; border: 1px solid transparent; border-bottom: 0; }
.menu .on { position: relative; height: 16px; padding-bottom: 2px; background: #fff; border-color: #d5dfec; color: #2b579a; }
.brand { color: #009996; font: bold 13px/14px "Open Sans", sans-serif; margin-right: 35px; }
.helpers { display: flex; gap: 4px; padding-right: 1px; }
.helpers svg { width: 10px; height: 11px; }

/* ribbon */
.ribbon { display: flex; height: 58px; padding-top: 2px; border-bottom: 2px solid #ececec; }
.group { display: flex; flex-direction: column; border-right: 1px solid #e2e2e2; margin-bottom: 3px; }
.group h2 { height: 10px; line-height: 10px; text-align: center; color: #777; }
.body { flex: 1; display: flex; align-items: flex-start; }
.col { flex-direction: column; align-items: center; padding-top: 5px; gap: 4px; }
.big { flex-direction: column; justify-content: flex-start; padding-top: 2px; width: 30px; line-height: 8px; text-align: center; }
.big span { margin-top: 4px; }
.big:disabled { color: #aaa; }
.g-show { width: 27px; }
.g-clip { width: 64px; padding-left: 3px; }
.g-views { width: 115px; padding-left: 3px; }
.gallery { display: grid; grid-template-columns: repeat(3, 22px); grid-auto-rows: 21px; }
.gallery button { height: 21px; }
.gallery .sel { background: #f5f0df; border: 2px solid #c5d8ee; }
.scroller { display: flex; flex-direction: column; width: 11px; margin: 0 1px 0 4px; border: 1px solid #c9c9c9; }
.scroller button { height: 13px; }
.scroller button + button { border-top: 1px solid #c9c9c9; }
.scroller button:disabled { color: #bbb; }
.g-orient { width: 106px; padding-left: 2px; }
.g-orient .big { width: 28px; }
.mini { display: grid; grid-template-columns: repeat(3, 14px); grid-auto-rows: 14px; margin-left: 3px; }
.mini button { height: 14px; }
.g-orient .body .big:first-child { width: 30px; }
.g-shade { width: 70px; padding-left: 3px; }
.g-style { width: 201px; padding-left: 2px; }
.two { grid-template-columns: 14px 22px; margin-left: 0; }
.two button { justify-content: flex-start; }
.two .tiny { margin-left: 1px; color: #888; }
.cmds { display: grid; grid-template-rows: repeat(3, 14px); align-items: center; }
.cmds button, .cmds label { display: flex; justify-content: flex-start; align-items: center; gap: 1px; white-space: nowrap; width: 65px; }
.cmds .off { color: #aaa; }
.picks { flex: 1; padding: 0 3px 0 1px; }
.combo { position: relative; display: block; }
.combo select { display: block; width: 100%; height: 13px; padding: 0 1px; border: 1px solid #ababab; border-radius: 0; background: #fff; color: #222; font: inherit; line-height: 10px; appearance: none; }
.combo svg { position: absolute; right: 2px; top: 4px; }
.combo.off select { border-color: #dedede; color: #999; opacity: 1; }
.g-window { width: 117px; padding-left: 4px; }
.g-window .big { width: 32px; }
.g-window .sw { width: 46px; border-left: 1px solid #e2e2e2; height: 42px; }
.tall { height: 22px; }
.tall + span { margin-top: 2px; }
.big .tiny { color: #777; }
.sw span svg { display: inline-block; margin-left: 1px; }

/* work area */
.work { flex: 1; display: flex; min-height: 0; }
.rail { width: 20px; background: #f5f5f5; display: flex; flex-direction: column; align-items: center; flex: none; color: #3a567d; }
.rail button { flex-direction: column; justify-content: flex-start; gap: 2px; width: 100%; }
.rail svg { width: 14px; height: 12px; }
.rail span { writing-mode: vertical-rl; line-height: 9px; }
.left { padding: 4px 4px 0 0; gap: 11px; }
.r-lib { height: 87px; }
.r-style { height: 62px; margin-top: 5px; }
.rightrail { padding: 5px 0 0 4px; color: #2b579a; }
.r-learn { height: 105px; }
.center { flex: 1; display: flex; flex-direction: column; min-width: 0; }
.doctabs { display: flex; height: 20px; align-items: stretch; }
.tab { display: flex; align-items: center; gap: 3px; padding: 0 0 0 12px; color: #777; }
.tab button { margin-left: 11px; color: #666; }
.tab button svg { width: 7px; height: 7px; }
.tab.on { background: #2b579a; color: #fff; margin: 0 0 1px 1px; padding-right: 3px; }
.tab.on button { color: #fff; }
.tabnav { display: flex; align-items: center; gap: 1px; margin-left: auto; color: #666; padding: 0 0 3px; }
.mdi { flex: 1; display: flex; min-height: 0; border: solid #6a7684; border-width: 1px 0; }
.doc { flex: 1; display: flex; flex-direction: column; min-width: 0; padding: 0 4px 5px; background: #d6e2ef; border: 1px solid #5d6b7b; border-radius: 4px 4px 0 0; border-bottom: 0; }
.doc.active { background: linear-gradient(#9fbddd, #b4cde8 50%, #b4d8f0); border-color: #46566a; }
.dochead { display: flex; align-items: center; height: 19px; padding-top: 3px; gap: 4px; color: #8b929b; }
.doc:not(.active) .dochead { margin: 0 -4px; padding-left: 4px; padding-right: 4px; background: linear-gradient(#c4d3e5, #d8e3ef); }
.active .dochead { color: #1c2a3a; }
.winbtns { display: flex; gap: 2px; margin-left: auto; padding-right: 1px; }
.winbtns button { width: 21px; height: 12px; border: 1px solid #91a4bb; border-radius: 1px; color: #6d7784; background: #d3dfec; }
.active .winbtns button { background: linear-gradient(#c6d8ec, #9db8d6); border-color: #667f9d; }
.active .winbtns .close { background: linear-gradient(#e09a8c, #c34330 50%, #d8624a); border-color: #7c332c; color: #fff; }
.winbtns svg { width: 7px; height: 7px; }
.b-min { width: 8px; height: 3px; border: 1px solid #6f7a88; background: #fff; }
.b-max { width: 8px; height: 6px; border: 2px solid #f2f5f8; outline: 1px solid #6f7a88; outline-offset: -1px; background: #6f7a88; }
.view { position: relative; flex: 1; min-height: 0; background: #949494; overflow: hidden; }
.scene { width: 100%; height: 100%; }
.lid-shade { width: 360px; height: 480px; background: conic-gradient(at 245px 208px, #760000 0deg, #8c0000 90deg, #980000 135deg, #b40000 160deg, #c80000 180deg, #d00000 215deg, #cc0000 250deg, #c40000 275deg, #b80000 292deg, #a40000 306deg, #8c0000 318deg, #700000 332deg, #6c0000 345deg, #760000 360deg); }
.can-shade { width: 180px; height: 180px; background: conic-gradient(at 119px 116px, #e80000 0deg, #f00000 60deg, #f01010 95deg, #ff3030 110deg, #ff7070 122deg, #fff4f4 135deg, #ffb0b0 145deg, #ffd0d0 160deg, #f06060 178deg, #e01010 192deg, #f80000 215deg, #fa0000 300deg, #e80000 360deg); }
.pathfinder { position: absolute; top: 0; left: 0; width: 166px; }
.grip { height: 5px; background: #e3e3e3; border-bottom: 1px solid #bdbdbd; }
.grip::after { content: ""; display: block; width: 26px; margin: 0 auto; padding-top: 1px; border-bottom: 1px dotted #777; }
.pathfinder ul { padding-left: 3px; }
.pathfinder li { display: flex; align-items: center; height: 11px; }
.exp { width: 6px; height: 6px; margin: 0 5px 0 4px; }
.pathfinder input { appearance: none; width: 8px; height: 8px; margin-right: 4px; border: 1px solid #666; background: #fff; display: grid; place-items: center; flex: none; }
.pathfinder input:checked::before { content: ""; width: 5px; height: 3px; border: solid #111; border-width: 0 0 1px 1px; transform: rotate(-45deg); }
.chip { display: flex; align-items: center; gap: 2px; height: 9px; padding-right: 2px; background: #eef3f5; color: #222; white-space: nowrap; box-shadow: 1px 1px #bcd; }
.chip svg { width: 9px; height: 9px; }
.chip.dim { color: #858585; }
.root .chip { gap: 3px; }
.note { position: absolute; left: 2px; bottom: 109px; color: #222; }
.note i { display: block; width: 14px; height: 3px; background: #f0a850; }
.note p { height: 9px; margin-top: 1px; padding: 0 2px 0 10px; background: #edf3f6; }
.cube { position: absolute; right: 19px; bottom: 19px; width: 48px; height: 48px; }
.cube text { font: 8px "Liberation Sans", sans-serif; fill: #444; }
.cube .s7 { font-size: 8px; }
.cube .s5 { font-size: 6px; }

/* prompt bar */
.promptbar { display: flex; align-items: center; height: 17px; padding-left: 3px; }
.pi { width: 13px; height: 6px; }
.pl { margin: 0 8px 0 3px; color: #2b579a; }
.promptbar p { flex: 1; height: 14px; padding-left: 1px; border-left: 1px solid #888; border-top: 1px solid #aaa; color: #222; font: 9px/12px Lato, sans-serif; white-space: nowrap; }
.ptools { display: flex; align-items: center; gap: 3px; color: #222; padding: 0 1px 0 6px; }
.ptools .fa { font: bold 10px "Liberation Serif", serif; }
.ptools .fb { font: bold 8px "Liberation Serif", serif; }
.ptools sup { font-size: 4px; }

/* status bar */
.status { display: flex; align-items: center; height: 12px; background: #2b579a; color: #fff; }
.status .count { margin-left: auto; margin-right: 71px; }
.status input[type=text] { width: 94px; height: 12px; padding: 0 2px; border: 0; background: #fff; font: inherit; }
.status ::placeholder { color: #aaa; }
.stools { display: flex; gap: 5px; padding: 0 5px 0 2px; }
.stools svg, .status > button svg { width: 10px; height: 10px; }
.status input[type=range] { appearance: none; width: 74px; height: 10px; margin: 0 2px; background: linear-gradient(#dbe4f2, #dbe4f2) center / 100% 1px no-repeat; }
.status input[type=range]::-webkit-slider-thumb { appearance: none; width: 6px; height: 10px; border: 1px solid #dfe8f4; border-radius: 0 0 3px 3px; background: #5f86bd; }
.status .rec { margin-left: 3px; margin-right: 2px; }
```
